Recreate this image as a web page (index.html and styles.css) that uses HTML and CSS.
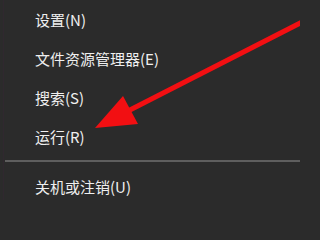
FILE: index.html
```html
<!DOCTYPE html>
<html lang="zh-CN">
<head>
<meta charset="utf-8">
<link rel="stylesheet" href="styles.css">
</head>
<body>
<div class="screen">
  <ul class="menu">
    <li class="item">设置(N)</li>
    <li class="item">文件资源管理器(E)</li>
    <li class="item">搜索(S)</li>
    <li class="item">运行(R)</li>
    <li class="sep"></li>
    <li class="item item-last">关机或注销(U)</li>
  </ul>
  <svg class="arrow" width="300" height="200" viewBox="0 0 300 200">
    <line x1="310" y1="18" x2="126" y2="112" stroke="#f20f12" stroke-width="5" stroke-linecap="butt"/>
    <polygon points="95,128 123,96 138,124" fill="#f20f12"/>
  </svg>
</div>
</body>
</html>
```
FILE: styles.css
```css
html, body {
  margin: 0;
  padding: 0;
}
body {
  width: 300px;
  height: 200px;
  overflow: hidden;
  background: #2b2b2b;
}
.screen {
  position: relative;
  width: 300px;
  height: 200px;
  overflow: hidden;
  background: #2b2b2b;
  border-left: 3px solid #2b2b2b;
  box-sizing: border-box;
  box-shadow: inset 1px 0 0 #30282f;
}
.menu {
  list-style: none;
  margin: 0;
  padding: 0;
  display: flex;
  flex-direction: column;
}
.item {
  height: 39px;
  display: flex;
  align-items: center;
  padding-left: 32px;
  font-family: "Noto Sans CJK SC", "Liberation Sans", sans-serif;
  font-size: 15px;
  color: #efefef;
  white-space: nowrap;
}
.item-last {
  height: 48px;
}
.sep {
  margin-top: 4px;
  margin-left: 2px;
  height: 2px;
  background: #5e5e5e;
}
.arrow {
  position: absolute;
  left: -3px;
  top: 0;
}
```
